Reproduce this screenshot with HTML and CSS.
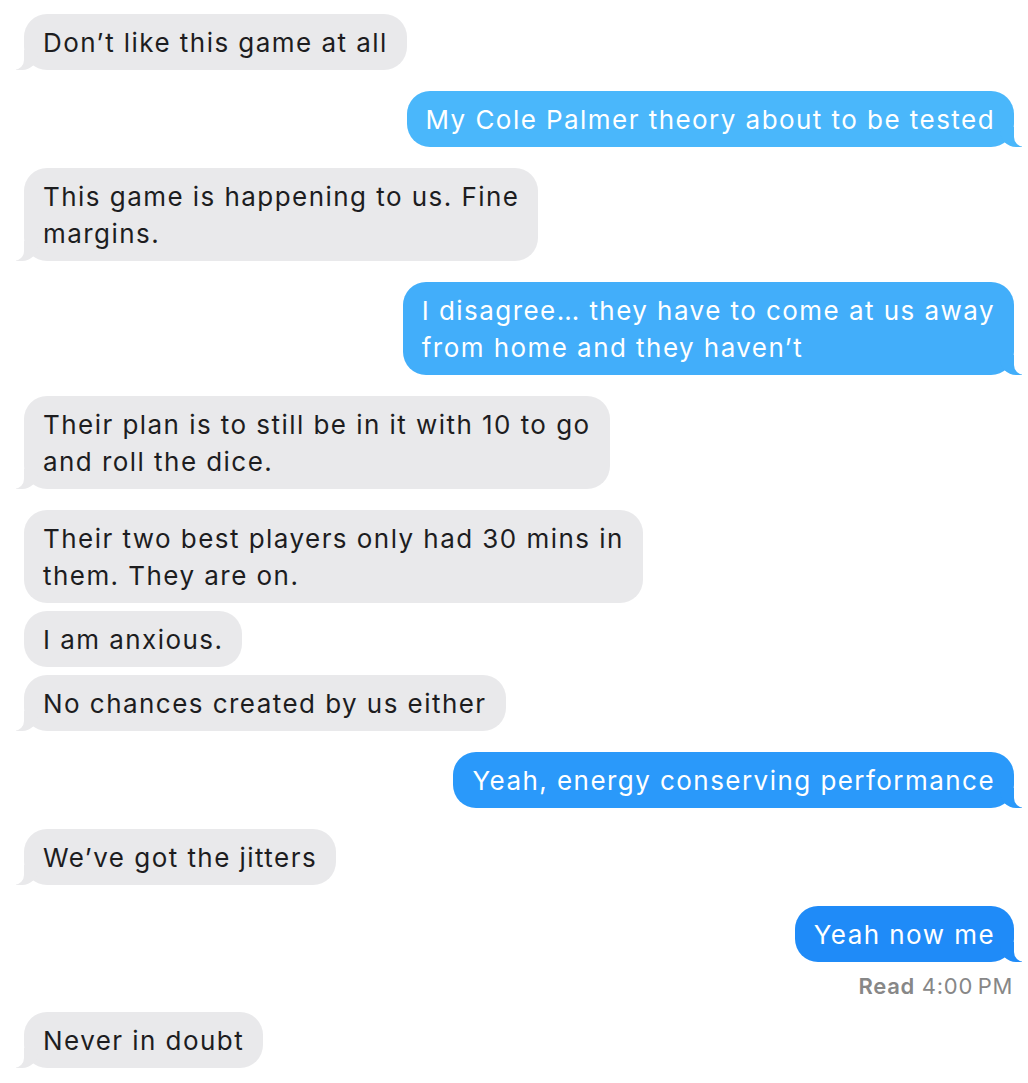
FILE: index.html
```html
<!DOCTYPE html>
<html lang="en">
<head>
    <meta charset="UTF-8">
    <meta name="viewport" content="width=device-width, initial-scale=1.0">
    <title>Messages</title>
    <link rel="stylesheet" href="styles.css">
</head>
<body>
    <div class="thread">
        <div class="msg in tail">Don’t like this game at all</div>
        <div class="msg out tail sent-1">My Cole Palmer theory about to be tested</div>
        <div class="msg in tail">This game is happening to us. Fine<br>margins.</div>
        <div class="msg out tail sent-2">I disagree… they have to come at us away<br>from home and they haven’t</div>
        <div class="msg in tail">Their plan is to still be in it with 10 to go<br>and roll the dice.</div>
        <div class="msg in">Their two best players only had 30 mins in<br>them. They are on.</div>
        <div class="msg in grouped">I am anxious.</div>
        <div class="msg in tail grouped">No chances created by us either</div>
        <div class="msg out tail sent-3">Yeah, energy conserving performance</div>
        <div class="msg in tail">We’ve got the jitters</div>
        <div class="msg out tail sent-4">Yeah now me</div>
        <div class="receipt"><b>Read</b> 4:00&#8201;PM</div>
        <div class="msg in tail after-receipt">Never in doubt</div>
    </div>
</body>
</html>
```

FILE: styles.css
```css
html, body {
    margin: 0;
    background: #fff;
}

.thread {
    display: flex;
    flex-direction: column;
    padding: 14px 14px 0 24px;
    font-family: 'Inter', 'Liberation Sans', sans-serif;
}

.msg {
    position: relative;
    max-width: 640px;
    padding: 10px 19px 9px;
    font-size: 26px;
    line-height: 37px;
    letter-spacing: 1.45px;
    border-radius: 23px;
    margin-top: 21px;
}

.msg:first-child {
    margin-top: 0;
}

.msg.grouped {
    margin-top: 8px;
}

.msg.in {
    align-self: flex-start;
    background: #e9e9eb;
    color: #1d1d1f;
}

.msg.out {
    align-self: flex-end;
    color: #fff;
}

/* sent bubbles get darker further down the thread */
.sent-1 { background: #4ab7fb; }
.sent-2 { background: #42aefa; }
.sent-3 { background: #2a99fa; }
.sent-4 { background: #1f8bf8; }

/* the little tail under the last bubble of a run */
.msg.tail::before,
.msg.tail::after {
    content: "";
    position: absolute;
    bottom: 0;
    height: 20px;
}

.msg.in.tail::before {
    left: -8px;
    width: 22px;
    background: inherit;
    border-bottom-right-radius: 16px;
}

.msg.in.tail::after {
    left: -10px;
    width: 10px;
    background: #fff;
    border-bottom-right-radius: 10px;
}

.msg.out.tail::before {
    right: -8px;
    width: 22px;
    background: inherit;
    border-bottom-left-radius: 16px;
}

.msg.out.tail::after {
    right: -10px;
    width: 10px;
    background: #fff;
    border-bottom-left-radius: 10px;
}

.receipt {
    align-self: flex-end;
    margin-top: 10px;
    margin-right: 1px;
    font-size: 22px;
    line-height: 28px;
    letter-spacing: 0.7px;
    color: #878787;
}

.receipt b {
    font-weight: 600;
}

.msg.after-receipt {
    margin-top: 12px;
}
```
